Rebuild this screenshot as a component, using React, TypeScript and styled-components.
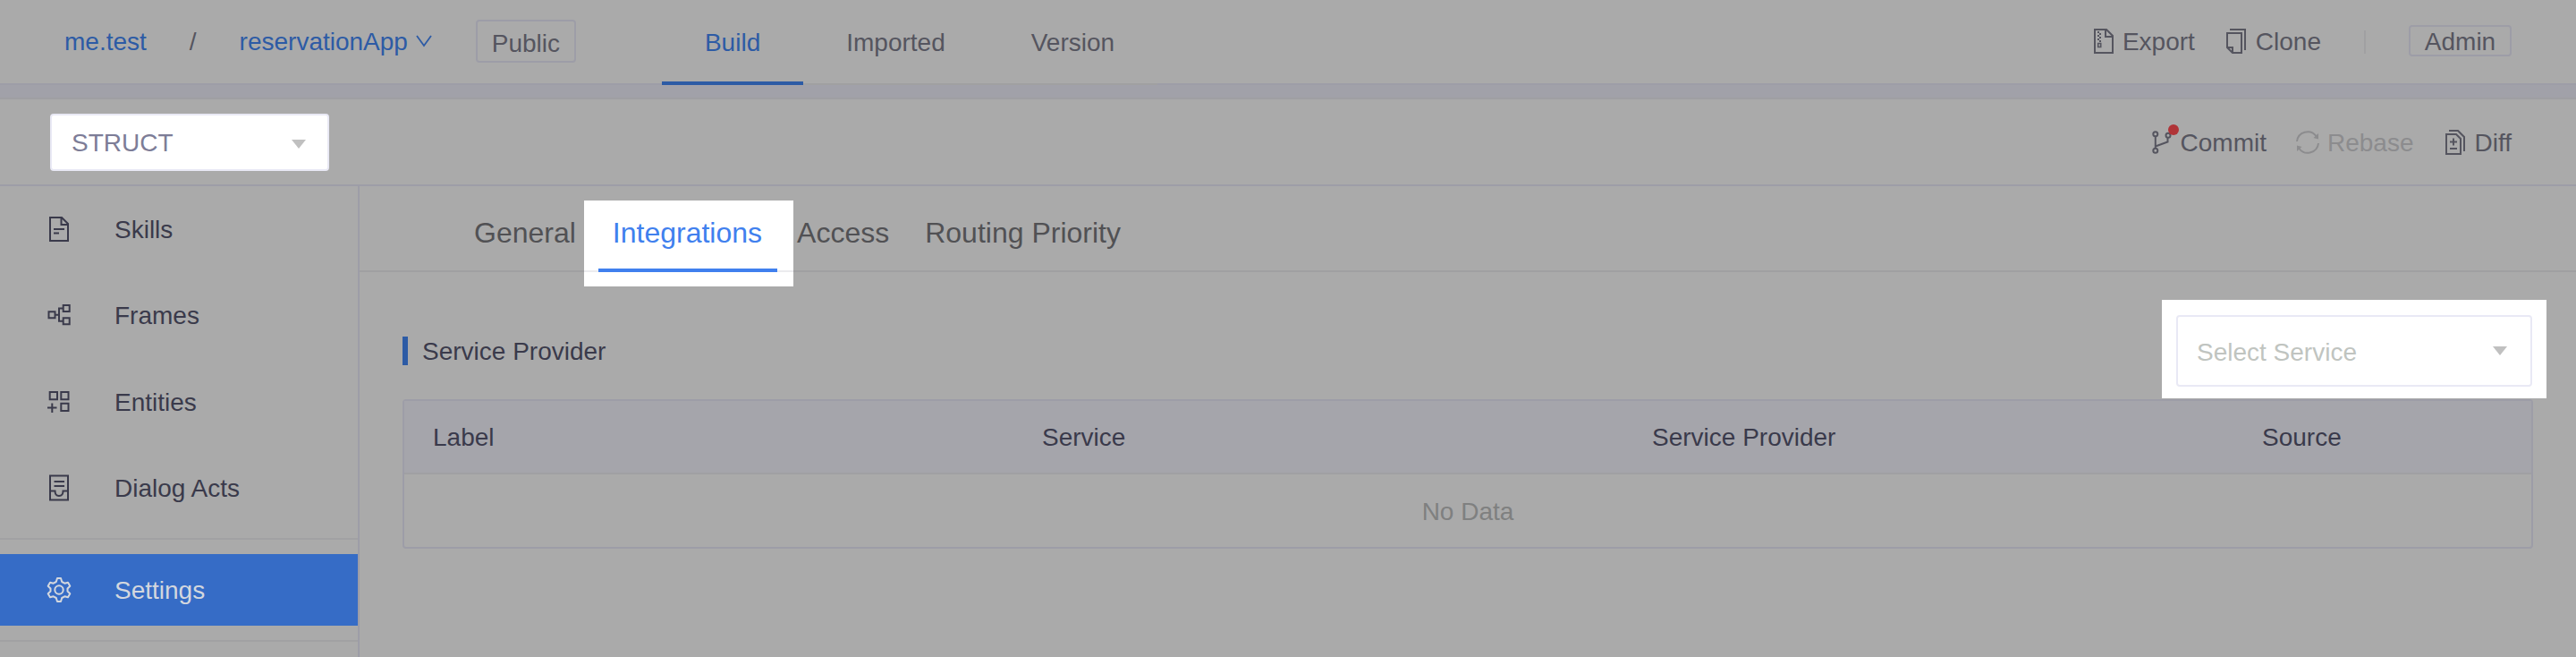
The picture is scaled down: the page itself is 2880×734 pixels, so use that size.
import React from "react";
import styled, { createGlobalStyle, css } from "styled-components";

const Global = createGlobalStyle`
  * { box-sizing: border-box; }
  body { margin: 0; background: #aaaaaa; font-family: "Liberation Sans", Arial, sans-serif; }
  svg { display: block; flex: none; }
`;

const c = {
  line: "#9d9da7",
  softLine: "#a0a0a1",
  band: "#a1a1a9",
  head: "#a5a5ab",
  blue: "#2d5ba5",
  bright: "#4080ee",
  ink: "#3a3a4b",
  text: "#55555f",
};

const Page = styled.div`
  width: 2880px;
  height: 734px;
  overflow: hidden;
  display: flex;
  flex-direction: column;
  background: #aaaaaa;
  color: ${c.ink};
  font-size: 28px;
  line-height: 32px;
  white-space: nowrap;
`;

const Label = styled.span`
  padding-top: 2px;
`;

const TopBar = styled.header`
  height: 95px;
  flex: none;
  display: flex;
  align-items: flex-start;
  border-bottom: 2px solid ${c.line};
  padding: 0 72px 0 72px;
`;
const Crumb = styled.a`
  display: flex;
  align-items: center;
  margin-top: 31px;
  color: ${c.blue};
`;
const Slash = styled.span`
  margin: 31px 48px 0;
  color: ${c.text};
`;
const Chevron = styled.svg`
  margin: -2px 0 0 9px;
`;
const PublicTag = styled.div`
  width: 112px;
  height: 48px;
  margin: 22px 0 0 49px;
  padding-top: 9px;
  text-align: center;
  border: 2px solid ${c.line};
  border-radius: 4px;
  color: ${c.text};
`;
const Nav = styled.nav`
  display: flex;
  height: 95px;
  margin-left: 96px;
`;
const NavItem = styled.a<{ $active?: boolean }>`
  height: 95px;
  padding: 32px 48px 0;
  color: ${(p) => (p.$active ? c.blue : c.text)};
  border-bottom: ${(p) => (p.$active ? `4px solid ${c.blue}` : `2px solid ${c.softLine}`)};
`;
const Tools = styled.div<{ $top: number }>`
  display: flex;
  margin-left: auto;
  padding-top: ${(p) => p.$top}px;
`;
const Tool = styled.button<{ $gap: number; $after: number; $muted?: boolean }>`
  position: relative;
  display: flex;
  align-items: center;
  gap: ${(p) => p.$gap}px;
  height: 32px;
  margin: 0 ${(p) => p.$after}px 0 0;
  padding: 0;
  border: 0;
  background: none;
  font: inherit;
  color: ${(p) => (p.$muted ? "#8c8c8e" : c.text)};
`;
const Divider = styled.i`
  width: 2px;
  height: 26px;
  margin: 4px 48px 0 0;
  background: #a0a0a2;
`;
const AdminTag = styled.div`
  width: 115px;
  height: 35px;
  margin-top: -2px;
  text-align: center;
  line-height: 34px;
  border: 2px solid ${c.line};
  border-radius: 4px;
  color: ${c.text};
`;
const Dot = styled.i`
  position: absolute;
  left: 18px;
  top: -4px;
  width: 12px;
  height: 12px;
  border-radius: 50%;
  background: #b03438;
`;

const Band = styled.div`
  height: 16px;
  flex: none;
  background: ${c.band};
  border-bottom: 2px solid #9f9fa3;
`;
const SubBar = styled.div`
  height: 97px;
  flex: none;
  display: flex;
  align-items: flex-start;
  border-bottom: 2px solid ${c.line};
  padding: 0 72px 0 56px;
`;
const selectBase = css`
  display: flex;
  align-items: center;
  justify-content: space-between;
  background: #fff;
  border: 2px solid #e9e9f5;
  border-radius: 4px;
`;
const BranchSelect = styled.div`
  ${selectBase}
  width: 312px;
  height: 64px;
  margin-top: 16px;
  padding: 0 24px 0 22px;
  color: #7d7d97;
`;
const Triangle = styled.i<{ $up?: number }>`
  border: 8.5px solid transparent;
  border-top: 10px solid #c0c0c0;
  border-bottom: 0;
  margin-top: ${(p) => p.$up ?? 0}px;
`;

const Body = styled.div`
  flex: 1;
  display: flex;
  min-height: 0;
`;
const Side = styled.aside`
  width: 402px;
  flex: none;
  border-right: 2px solid ${c.line};
  padding-top: 8px;
`;
const SideItem = styled.a<{ $active?: boolean }>`
  display: flex;
  align-items: center;
  height: 80px;
  margin-bottom: 16.3px;
  padding-left: 50px;
  gap: 46px;
  color: ${(p) => (p.$active ? "#d3d7de" : c.ink)};
  background: ${(p) => (p.$active ? "#366cc6" : "none")};
`;
const SideLine = styled.div`
  height: 2px;
  margin-bottom: 16px;
  background: #a1a1a3;
`;

const Main = styled.main`
  flex: 1;
  min-width: 0;
`;
const Tabs = styled.div`
  height: 96px;
  display: flex;
  gap: 40px;
  padding: 34px 0 0 128px;
  border-bottom: 2px solid #a0a0a2;
  font-size: 32px;
  line-height: 36px;
  color: #515154;
`;
const Tab = styled.a`
  position: relative;
`;
const Spotlight = styled.div`
  position: absolute;
  left: -31px;
  top: -18px;
  width: 234px;
  height: 96px;
  padding: 18px 0 0 32px;
  color: ${c.bright};
  background: #fff;
`;
const TabRule = styled.div`
  position: absolute;
  left: 0;
  top: 78px;
  width: 234px;
  height: 2px;
  background: #ebebee;
`;
const TabInk = styled.div`
  position: absolute;
  left: 16px;
  top: 76px;
  width: 200px;
  height: 4px;
  background: ${c.bright};
`;

const SectionHead = styled.div`
  display: flex;
  align-items: flex-start;
  justify-content: space-between;
  height: 142px;
  padding: 31px 33px 0 48px;
`;
const SectionTitle = styled.h2`
  margin: 41px 0 0;
  height: 32px;
  padding: 1px 0 0 16px;
  border-left: 6px solid ${c.blue};
  font-size: 28px;
  line-height: 32px;
  font-weight: 400;
`;
const SelectFrame = styled.div`
  width: 430px;
  height: 110px;
  padding: 17px 16px 13px;
  background: #fff;
`;
const ServiceSelect = styled.div`
  ${selectBase}
  height: 80px;
  padding: 2px 26px 0 21px;
  color: #c0c4c0;
`;
const Table = styled.div`
  width: 2382px;
  height: 167px;
  margin-left: 48px;
  border: 2px solid ${c.line};
  border-radius: 4px;
`;
const HeadRow = styled.div`
  display: grid;
  grid-template-columns: 681px 682px 682px 1fr;
  align-items: center;
  height: 82px;
  padding: 2px 0 0 32px;
  background: ${c.head};
  border-bottom: 2px solid #a0a0a3;
`;
const Empty = styled.div`
  height: 81px;
  line-height: 83px;
  text-align: center;
  color: #7f8080;
`;

type IconProps = { w: number; h: number; sw?: number; children: React.ReactNode };
const Icon = ({ w, h, sw = 2, children }: IconProps) => (
  <svg width={w} height={h} viewBox={`0 0 ${w} ${h}`} fill="none" stroke="currentColor" strokeWidth={sw}>
    {children}
  </svg>
);

const ExportIcon = () => (
  <Icon w={24} h={30}>
    <path d="M2 2H15L22 9V28H2Z M14 2V10H22" />
    <path d="M6 4V16" strokeDasharray="2 2" />
    <path d="M8 6V18" strokeDasharray="2 2" />
    <path d="M5.700 17.500H8.700V21.500H5.700Z" strokeWidth="1.600" />
  </Icon>
);
const CloneIcon = () => (
  <Icon w={24} h={30}>
    <path d="M2 6H18V28H8L2 22Z M2 22H8V28" />
    <path d="M5 2H22V25" />
  </Icon>
);
const CommitIcon = () => (
  <Icon w={26} h={28}>
    <circle cx="3.800" cy="4.700" r="2.500" />
    <circle cx="3.800" cy="23.300" r="2.500" />
    <circle cx="18" cy="6.300" r="2.500" />
    <path d="M3.800 7.500V20.500M3.800 18.500L17.500 13.500V9" />
  </Icon>
);
const RebaseIcon = () => (
  <Icon w={28} h={28}>
    <path d="M2 13A12 12 0 0 1 23.500 7M26 15A12 12 0 0 1 4.500 21" />
    <path d="M26 4V10.500L20.500 9Z M2 24V17.500L7.500 19Z" fill="currentColor" stroke="none" />
  </Icon>
);
const DiffIcon = () => (
  <Icon w={24} h={30}>
    <path d="M2 6H13L18 11V28H2Z" />
    <path d="M5 2H15L22 9V25" />
    <path d="M6 14.500H14M10 10.500V18.500M6 22H14" />
  </Icon>
);
const SkillsIcon = () => (
  <Icon w={32} h={32}>
    <path d="M6 3H19L26 10V29H6Z M18.500 3V11H26M10 16H22M10 20.500H16" />
  </Icon>
);
const FramesIcon = () => (
  <Icon w={32} h={32}>
    <path d="M4.500 12.300H11.500V19.300H4.500Z M20.700 5H27.700V12H20.700Z M20.700 19.300H27.700V26.300H20.700Z M12 15.800H16M20.500 8.500H16V22.800H20.500" />
  </Icon>
);
const EntitiesIcon = () => (
  <Icon w={32} h={32}>
    <path d="M5.700 5H14V13.300H5.700Z M18.300 5H26.500V13.300H18.300Z M18.300 17.700H26.500V26H18.300Z M3 22.500H13.500M8.300 17.500V28" />
  </Icon>
);
const DialogIcon = () => (
  <Icon w={32} h={32}>
    <path d="M6 2.500H26V29.500H6Z M10.500 9H22M10.500 14H22M6 19.500H11.500Q11.500 25 16 25Q20.500 25 20.500 19.500H26" />
  </Icon>
);
const GearIcon = () => (
  <Icon w={32} h={32}>
    <circle cx="16" cy="16" r="4.700" />
    <path
      strokeLinejoin="round"
      d="M14 3H18L19.200 7L22.300 8.700L26 7.700L28.300 11.700L25.500 14.500V17.500L28.300 20.300L26 24.300L22.300 23.300L19.200 25L18 29H14L12.800 25L9.700 23.300L6 24.300L3.700 20.300L6.500 17.500V14.500L3.700 11.700L6 7.700L9.700 8.700L12.800 7Z"
    />
  </Icon>
);

export default function App() {
  return (
    <>
      <Global />
      <Page>
        <TopBar>
          <Crumb>me.test</Crumb>
          <Slash>/</Slash>
          <Crumb>
            reservationApp
            <Chevron width="18" height="14" viewBox="0 0 18 14" fill="none" stroke="currentColor" strokeWidth="1.800">
              <path d="M1 1L9 12L17 1" />
            </Chevron>
          </Crumb>
          <PublicTag>Public</PublicTag>
          <Nav>
            <NavItem $active>Build</NavItem>
            <NavItem>Imported</NavItem>
            <NavItem>Version</NavItem>
          </Nav>
          <Tools $top={30}>
            <Tool $gap={9} $after={34}><ExportIcon /><Label>Export</Label></Tool>
            <Tool $gap={10} $after={48}><CloneIcon /><Label>Clone</Label></Tool>
            <Divider />
            <AdminTag>Admin</AdminTag>
          </Tools>
        </TopBar>
        <Band />
        <SubBar>
          <BranchSelect><Label>STRUCT</Label><Triangle $up={4} /></BranchSelect>
          <Tools $top={32}>
            <Tool $gap={6} $after={32}><CommitIcon /><Dot /><Label>Commit</Label></Tool>
            <Tool $gap={8} $after={34} $muted><RebaseIcon /><Label>Rebase</Label></Tool>
            <Tool $gap={10} $after={0}><DiffIcon /><Label>Diff</Label></Tool>
          </Tools>
        </SubBar>
        <Body>
          <Side>
            <SideItem><SkillsIcon /><Label>Skills</Label></SideItem>
            <SideItem><FramesIcon /><Label>Frames</Label></SideItem>
            <SideItem><EntitiesIcon /><Label>Entities</Label></SideItem>
            <SideItem><DialogIcon /><Label>Dialog Acts</Label></SideItem>
            <SideLine />
            <SideItem $active><GearIcon /><Label>Settings</Label></SideItem>
            <SideLine />
          </Side>
          <Main>
            <Tabs>
              <Tab>General</Tab>
              <Tab>
                Integrations
                <Spotlight>
                  <TabRule />
                  <TabInk />
                  Integrations
                </Spotlight>
              </Tab>
              <Tab>Access</Tab>
              <Tab>Routing Priority</Tab>
            </Tabs>
            <SectionHead>
              <SectionTitle>Service Provider</SectionTitle>
              <SelectFrame>
                <ServiceSelect><Label>Select Service</Label><Triangle $up={-2} /></ServiceSelect>
              </SelectFrame>
            </SectionHead>
            <Table>
              <HeadRow>
                <span>Label</span>
                <span>Service</span>
                <span>Service Provider</span>
                <span>Source</span>
              </HeadRow>
              <Empty>No Data</Empty>
            </Table>
          </Main>
        </Body>
      </Page>
    </>
  );
}
